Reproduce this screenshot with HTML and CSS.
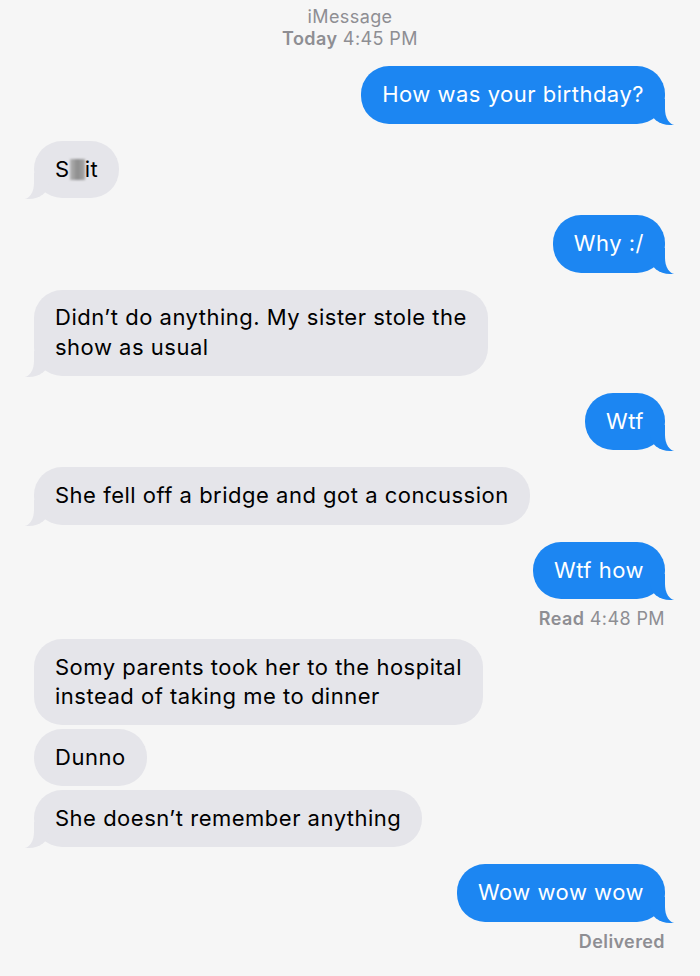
FILE: index.html
```
<!DOCTYPE html>
<html lang="en">
<head>
    <meta charset="UTF-8">
    <title>iMessage</title>
    <link rel="stylesheet" href="styles.css">
</head>
<body>
    <div class="thread">
        <div class="header">
            <div>iMessage</div>
            <div><b>Today</b> 4:45 PM</div>
        </div>

        <div class="bubble sent tail">How was your birthday?</div>
        <div class="bubble received tail gap">S<span class="blur"></span>it</div>
        <div class="bubble sent tail gap">Why :/</div>
        <div class="bubble received tail gap multi">Didn’t do anything. My sister stole the<br>show as usual</div>
        <div class="bubble sent tail gap">Wtf</div>
        <div class="bubble received tail gap">She fell off a bridge and got a concussion</div>
        <div class="bubble sent tail gap">Wtf how</div>
        <div class="receipt"><b>Read</b> 4:48 PM</div>

        <div class="bubble received multi">Somy parents took her to the hospital<br>instead of taking me to dinner</div>
        <div class="bubble received near">Dunno</div>
        <div class="bubble received tail near">She doesn’t remember anything</div>
        <div class="bubble sent tail gap">Wow wow wow</div>
        <div class="receipt"><b>Delivered</b></div>
    </div>
</body>
</html>
```

FILE: styles.css
```
body {
    margin: 0;
    padding: 0;
    background-color: #f6f6f6;
    font-family: Inter, "Liberation Sans", Arial, sans-serif;
}
.thread {
    width: 700px;
    display: flex;
    flex-direction: column;
    padding: 6px 0 20px;
    box-sizing: border-box;
}
.header {
    text-align: center;
    color: #8e8e93;
    font-size: 18px;
    letter-spacing: 0.4px;
    line-height: 22px;
    margin-bottom: 16px;
}
.header b,
.receipt b {
    font-weight: 600;
}
.bubble {
    position: relative;
    font-size: 22px;
    letter-spacing: 0.5px;
    line-height: 29.5px;
    padding: 14px 21px;
    border-radius: 28px;
    white-space: nowrap;
}
.bubble.multi {
    padding-top: 13.5px;
    padding-bottom: 13.5px;
}
.sent {
    align-self: flex-end;
    margin-right: 35px;
    background-color: #1c86f2;
    color: #ffffff;
}
.received {
    align-self: flex-start;
    margin-left: 34px;
    background-color: #e5e5ea;
    color: #000000;
}
.gap {
    margin-top: 17px;
}
.near {
    margin-top: 3.5px;
}
.tail::before,
.tail::after {
    content: "";
    position: absolute;
    bottom: -1px;
    height: 26px;
}
.sent.tail::before {
    right: -9px;
    border-right: 24px solid #1c86f2;
    border-bottom-left-radius: 20px 16px;
}
.sent.tail::after {
    right: -14px;
    width: 14px;
    background-color: #f6f6f6;
    border-bottom-left-radius: 10px 16px;
}
.received.tail::before {
    left: -9px;
    border-left: 24px solid #e5e5ea;
    border-bottom-right-radius: 20px 16px;
}
.received.tail::after {
    left: -14px;
    width: 14px;
    background-color: #f6f6f6;
    border-bottom-right-radius: 10px 16px;
}
.blur {
    display: inline-block;
    width: 15px;
    height: 21px;
    vertical-align: -3px;
    background: linear-gradient(90deg, #b4b4b4, #8d8d8d 50%, #a8a8a8);
    filter: blur(1px);
}
.receipt {
    align-self: flex-end;
    margin-right: 35px;
    margin-top: 9px;
    margin-bottom: 9px;
    color: #8e8e93;
    font-size: 18px;
    letter-spacing: 0.4px;
    line-height: 22px;
}
```
